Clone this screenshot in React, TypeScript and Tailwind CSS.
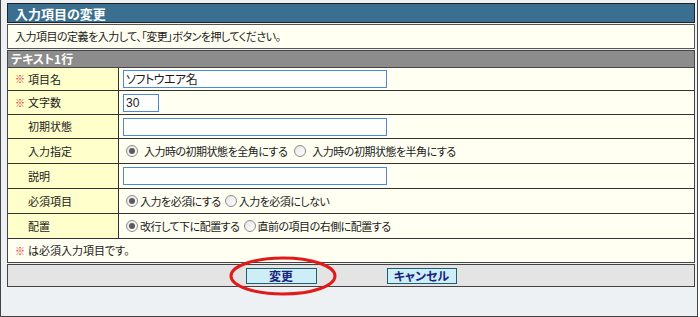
import React from 'react';

type Row = {
  label: string;
  required?: boolean;
  h: string;
  kind: 'input' | 'short' | 'radio';
  value?: string;
  options?: string[];
  gap?: string;
  outer?: string;
};

const rows: Row[] = [
  { label: '項目名', required: true, h: 'h-[23px]', kind: 'input', value: 'ソフトウエア名' },
  { label: '文字数', required: true, h: 'h-[24px]', kind: 'short', value: '30' },
  { label: '初期状態', h: 'h-[24px]', kind: 'input', value: '' },
  {
    label: '入力指定',
    h: 'h-[25px]',
    kind: 'radio',
    options: ['入力時の初期状態を全角にする', '入力時の初期状態を半角にする'],
    gap: 'gap-[6px]',
    outer: 'gap-[7px]',
  },
  { label: '説明', h: 'h-[25px]', kind: 'input', value: '' },
  { label: '必須項目', h: 'h-[25px]', kind: 'radio', options: ['入力を必須にする', '入力を必須にしない'], gap: 'gap-[2px]', outer: 'gap-[4px]' },
  { label: '配置', h: 'h-[25px]', kind: 'radio', options: ['改行して下に配置する', '直前の項目の右側に配置する'], gap: 'gap-[2px]', outer: 'gap-[4px]' },
];

const Radio: React.FC<{ checked?: boolean }> = ({ checked }) => (
  <span className="w-[12px] h-[12px] rounded-full border border-[#8a8a8a] bg-gradient-to-br from-[#e6e6e6] to-white flex items-center justify-center shrink-0">
    {checked && <span className="w-[6px] h-[6px] rounded-full bg-[#5a5a5a]" />}
  </span>
);

const Req: React.FC<{ show?: boolean }> = ({ show }) => (
  <span className="w-[13px] text-[#e02020] text-[10px] font-bold">{show ? '※' : ''}</span>
);

const App: React.FC = () => {
  return (
    <div className="relative w-[698px] h-[317px] bg-[#eef1f4] border-x border-b border-[#444] pl-[6px] pr-[2px] pt-[3px] flex flex-col gap-[1px] text-[#1a1a1a] font-['Noto_Sans_CJK_JP','Noto_Sans',sans-serif] [font-feature-settings:'palt'] leading-none">
      {/* Title */}
      <div className="h-[20px] bg-[#3b6f8f] border border-[#222] text-white font-bold text-[13px] pl-[7px] flex items-center">
        入力項目の変更
      </div>

      {/* Description */}
      <div className="h-[25px] bg-[#fffff2] border border-[#555] pl-[7px] flex items-center text-[11px] tracking-[-0.5px]">
        入力項目の定義を入力して、「変更」ボタンを押してください。
      </div>

      {/* Form */}
      <div className="h-[213px] border border-[#444] flex flex-col">
        <div className="h-[17px] bg-[#8c8c8c] border-b border-[#444] text-white font-bold text-[12px] pl-[3px] flex items-center">
          テキスト1行
        </div>
        {rows.map((r) => (
          <div key={r.label} className={`${r.h} flex border-b border-[#333]`}>
            <div className="w-[111px] bg-[#ffffcc] border-r border-[#333] pl-[7px] flex items-center text-[11px]">
              <Req show={r.required} />
              {r.label}
            </div>
            <div className="flex-1 bg-[#fffff2] pl-[4px] flex items-center text-[11px]">
              {r.kind === 'input' && (
                <div className="w-[264px] h-[18px] bg-white border border-[#4a8ad8] px-[2px] flex items-center text-[12px] tracking-[-0.5px]">
                  {r.value}
                </div>
              )}
              {r.kind === 'short' && (
                <div className="w-[36px] h-[18px] bg-white border border-[#4a8ad8] px-[2px] flex items-center text-[12px] font-['Liberation_Sans',sans-serif]">
                  {r.value}
                </div>
              )}
              {r.kind === 'radio' && r.options && (
                <div className={`flex items-center pl-[3px] tracking-[-0.5px] ${r.outer}`}>
                  <span className={`flex items-center ${r.gap}`}>
                    <Radio checked />
                    {r.options[0]}
                  </span>
                  <span className={`flex items-center ${r.gap}`}>
                    <Radio />
                    {r.options[1]}
                  </span>
                </div>
              )}
            </div>
          </div>
        ))}
        <div className="h-[23px] bg-[#fffff2] pl-[7px] flex items-center text-[11px]">
          <Req show />
          は必須入力項目です。
        </div>
      </div>

      {/* Buttons */}
      <div className="h-[23px] bg-[#e4e4e4] border border-[#444] flex items-center justify-center gap-[70px]">
        <button className="w-[71px] h-[16px] bg-[#cdeef6] border border-[#1f5f6f] text-[#1a237e] font-bold text-[12px] flex items-center justify-center">
          変更
        </button>
        <button className="w-[70px] h-[16px] bg-[#cdeef6] border border-[#1f5f6f] text-[#1a237e] font-bold text-[12px] flex items-center justify-center">
          キャンセル
        </button>
      </div>

      {/* Annotation */}
      <svg className="absolute left-[228px] top-[256px]" width="108" height="40" viewBox="0 0 108 40">
        <ellipse cx="54" cy="20" rx="52" ry="18" fill="none" stroke="#e21a1a" strokeWidth="3" />
      </svg>
    </div>
  );
};

export default App;
